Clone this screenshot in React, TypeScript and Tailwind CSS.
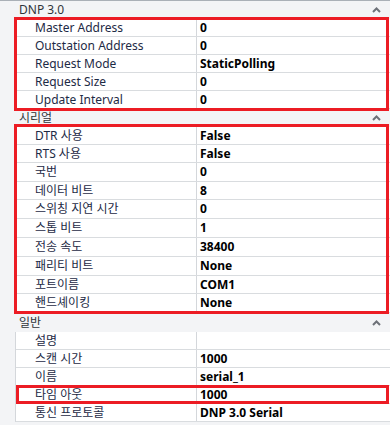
import React from "react";

type Row = { name: string; value: string; h: string };

const Caret = () => (
  <svg width="9" height="6" viewBox="0 0 9 6" className="mr-[9px]">
    <polyline points="1,5 4.5,1.5 8,5" fill="none" stroke="#6d7178" strokeWidth="2" />
  </svg>
);

const Header = ({ title, h }: { title: string; h: string }) => (
  <div className={`flex ${h} items-center justify-between bg-[#f3f4f6] pl-[19px] text-[12px] text-[#30343a]`}>
    <span>{title}</span>
    <Caret />
  </div>
);

const PropRow = ({ r }: { r: Row }) => (
  <div className={`flex ${r.h} border-b border-[#d9dcdf] bg-white`}>
    <div className="flex w-[180px] shrink-0 items-center pl-[19px] text-[12px] text-[#1d2a45]">{r.name}</div>
    <div className="flex flex-1 items-center border-l border-[#d4d7db] pl-[3px] text-[12px] font-bold text-black">
      {r.value}
    </div>
  </div>
);

const RedBox = ({ cls }: { cls: string }) => (
  <div className={`pointer-events-none absolute border-[3px] border-[#ec1c24] ${cls}`} />
);

const dnp: Row[] = [
  { name: "Master Address", value: "0", h: "h-[18px]" },
  { name: "Outstation Address", value: "0", h: "h-[18px]" },
  { name: "Request Mode", value: "StaticPolling", h: "h-[18px]" },
  { name: "Request Size", value: "0", h: "h-[18px]" },
  { name: "Update Interval", value: "0", h: "h-[18px]" },
];

const serial: Row[] = [
  { name: "DTR 사용", value: "False", h: "h-[18px]" },
  { name: "RTS 사용", value: "False", h: "h-[18px]" },
  { name: "국번", value: "0", h: "h-[19px]" },
  { name: "데이터 비트", value: "8", h: "h-[18px]" },
  { name: "스위칭 지연 시간", value: "0", h: "h-[19px]" },
  { name: "스톱 비트", value: "1", h: "h-[19px]" },
  { name: "전송 속도", value: "38400", h: "h-[19px]" },
  { name: "패리티 비트", value: "None", h: "h-[19px]" },
  { name: "포트이름", value: "COM1", h: "h-[18px]" },
  { name: "핸드셰이킹", value: "None", h: "h-[19px]" },
];

const general: Row[] = [
  { name: "설명", value: "", h: "h-[18px]" },
  { name: "스캔 시간", value: "1000", h: "h-[18px]" },
  { name: "이름", value: "serial_1", h: "h-[18px]" },
];

const general2: Row[] = [{ name: "타임 아웃", value: "1000", h: "h-[18px]" }];
const general3: Row[] = [{ name: "통신 프로토콜", value: "DNP 3.0 Serial", h: "h-[18px]" }];

export default function App() {
  return (
    <div
      className="h-[425px] w-[390px] overflow-hidden border-t border-[#aab0b7] bg-[#f3f4f6]"
      style={{ fontFamily: '"Noto Sans", "Noto Sans CJK KR", sans-serif' }}
    >
      <Header title="DNP 3.0" h="h-[18px]" />
      <div className="relative ml-[15px] border-l border-[#d4d7db]">
        {dnp.map((r) => (
          <PropRow key={r.name} r={r} />
        ))}
        <RedBox cls="-top-[2px] -bottom-[2px] -left-[2px] right-[1px]" />
      </div>
      <Header title="시리얼" h="h-[18px]" />
      <div className="relative ml-[15px] border-l border-[#d4d7db]">
        {serial.map((r) => (
          <PropRow key={r.name} r={r} />
        ))}
        <RedBox cls="-top-[3px] -bottom-[1px] -left-[2px] right-[1px]" />
      </div>
      <Header title="일반" h="h-[19px]" />
      <div className="ml-[15px] border-l border-[#d4d7db]">
        {general.map((r) => (
          <PropRow key={r.name} r={r} />
        ))}
        <div className="relative">
          {general2.map((r) => (
            <PropRow key={r.name} r={r} />
          ))}
          <RedBox cls="-top-[1px] bottom-0 left-0 right-[1px]" />
        </div>
        {general3.map((r) => (
          <PropRow key={r.name} r={r} />
        ))}
      </div>
    </div>
  );
}
